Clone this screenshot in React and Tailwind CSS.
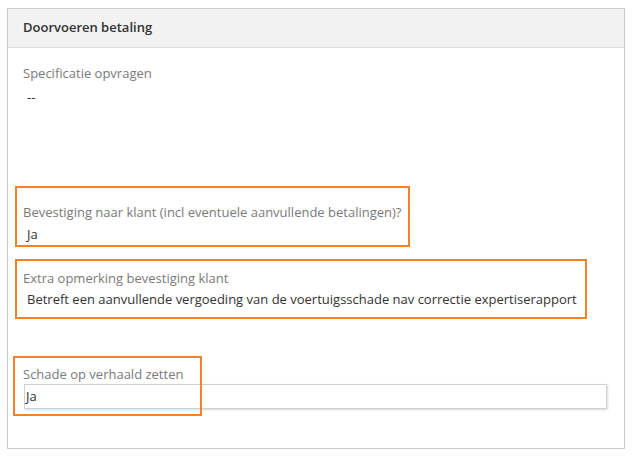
import React from 'react';

const font = { fontFamily: '"Segoe UI", "Open Sans", "Liberation Sans", sans-serif' };

function Label({ children, className = '' }) {
  return <div className={`text-[13px] leading-[20px] text-[#7a7a7a] ${className}`}>{children}</div>;
}

function Value({ children, className = '' }) {
  return <div className={`pl-[4px] text-[13px] leading-[20px] text-[#333] ${className}`}>{children}</div>;
}

function Marker({ className }) {
  // orange annotation frame drawn over the form
  return <div className={`pointer-events-none absolute border-2 border-[#f5822a] ${className}`} />;
}

export default function App() {
  return (
    <div className="relative h-[456px] w-[632px] overflow-hidden bg-white" style={font}>
      <div className="ml-[7px] mt-[8px] h-[441px] w-[618px] border border-[#cccccc]">
        {/* Header */}
        <div className="flex h-[39px] items-center border-b border-[#dddddd] bg-[#f2f2f2] px-[15px]">
          <span className="text-[13px] font-semibold text-[#333]">Doorvoeren betaling</span>
        </div>

        {/* Body */}
        <div className="px-[15px]">
          <Label className="mt-[15px]">Specificatie opvragen</Label>
          <Value className="mt-[4px]">--</Value>

          <Label className="mt-[95px]">Bevestiging naar klant (incl eventuele aanvullende betalingen)?</Label>
          <Value className="mt-[2px]">Ja</Value>

          <Label className="mt-[24px]">Extra opmerking bevestiging klant</Label>
          <Value className="mt-[1px]">
            Betreft een aanvullende vergoeding van de voertuigsschade nav correctie expertiserapport
          </Value>

          <Label className="mt-[55px] leading-[19px]">Schade op verhaald zetten</Label>
          <div className="ml-[1px] flex h-[25px] w-[583px] items-center border border-[#d0d0d0] pl-[1px] text-[13px] text-[#333] shadow-[1px_1px_2px_rgba(0,0,0,0.15)]">
            Ja
          </div>
        </div>
      </div>

      <Marker className="left-[15px] top-[186px] h-[61px] w-[395px]" />
      <Marker className="left-[15px] top-[259px] h-[60px] w-[572px]" />
      <Marker className="left-[13px] top-[356px] h-[60px] w-[189px]" />
    </div>
  );
}
